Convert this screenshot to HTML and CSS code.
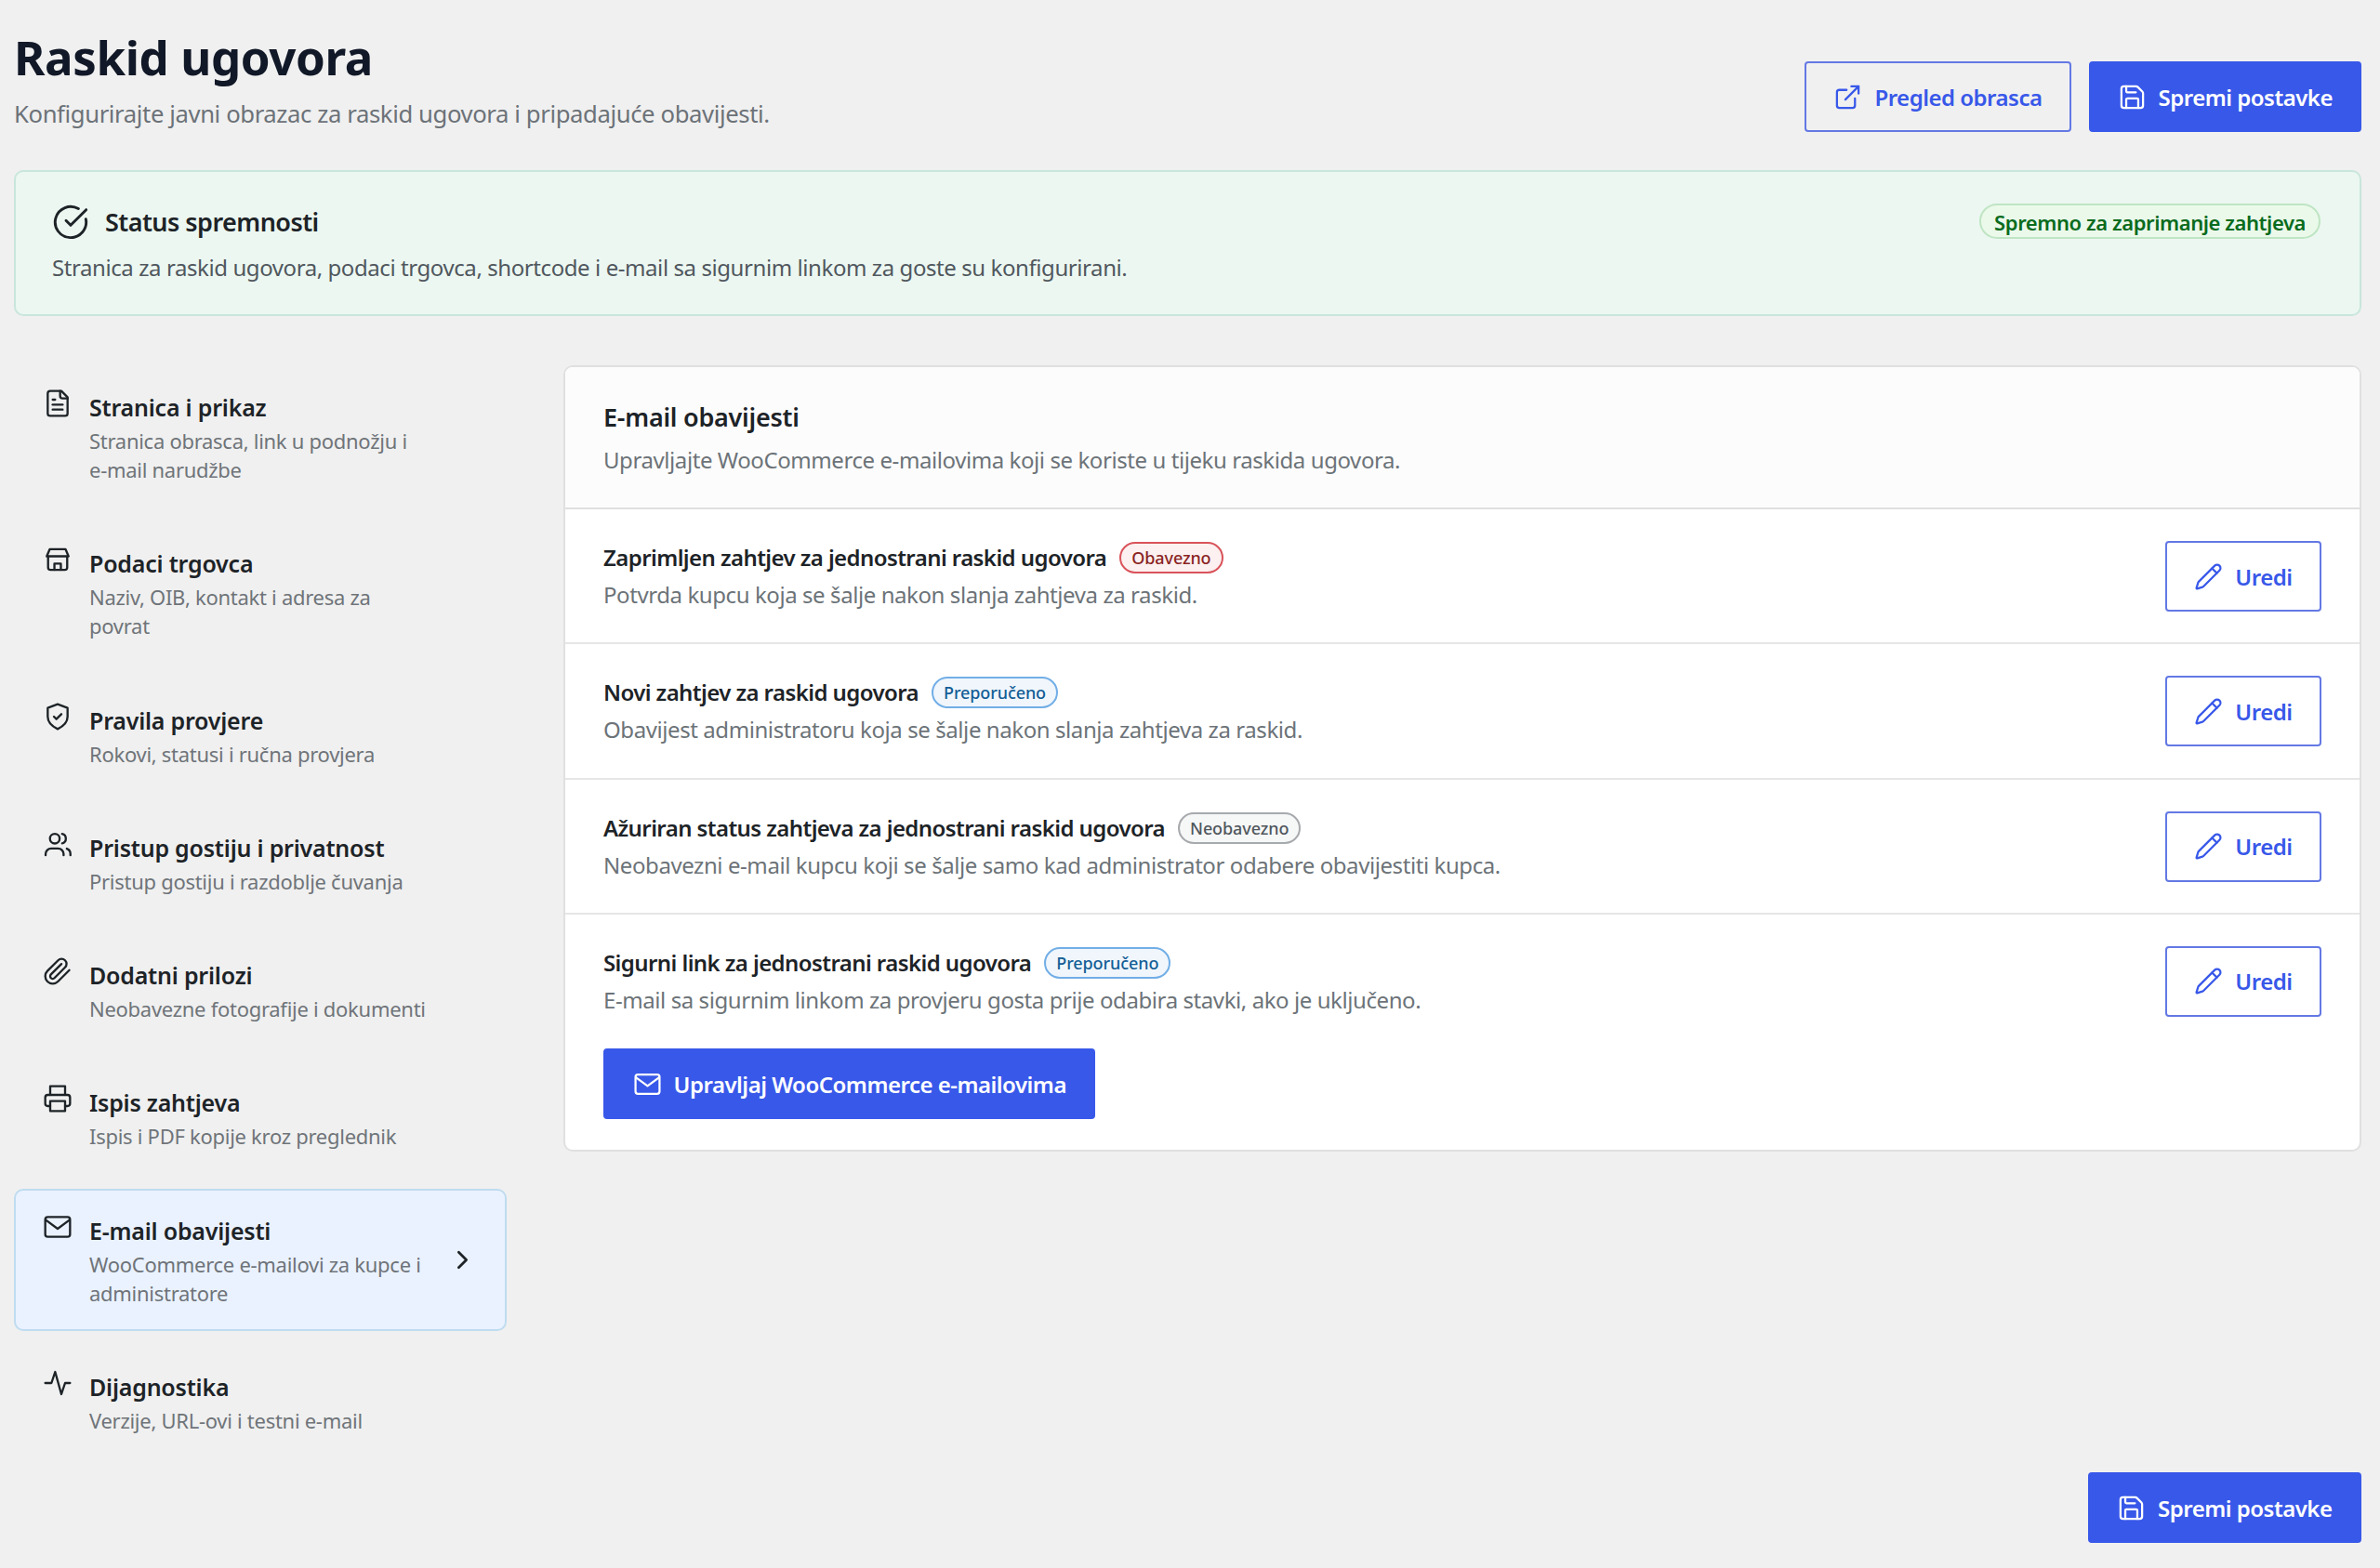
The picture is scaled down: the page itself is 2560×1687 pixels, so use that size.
FILE: index.html
```html
<!DOCTYPE html>
<html lang="hr">
<head>
    <meta charset="UTF-8">
    <meta name="viewport" content="width=device-width, initial-scale=1.0">
    <title>Raskid ugovora</title>
    <link rel="stylesheet" href="styles.css">
</head>
<body>

<!-- Icons -->
<svg class="sprite" xmlns="http://www.w3.org/2000/svg">
    <symbol id="i-external" viewBox="0 0 24 24"><path d="M15 3h6v6"/><path d="M10 14 21 3"/><path d="M18 13v6a2 2 0 0 1-2 2H5a2 2 0 0 1-2-2V8a2 2 0 0 1 2-2h6"/></symbol>
    <symbol id="i-save" viewBox="0 0 24 24"><path d="M15.2 3a2 2 0 0 1 1.4.6l3.8 3.8a2 2 0 0 1 .6 1.4V19a2 2 0 0 1-2 2H5a2 2 0 0 1-2-2V5a2 2 0 0 1 2-2z"/><path d="M17 21v-7a1 1 0 0 0-1-1H8a1 1 0 0 0-1 1v7"/><path d="M7 3v4a1 1 0 0 0 1 1h7"/></symbol>
    <symbol id="i-check" viewBox="0 0 24 24"><path d="M21.801 10A10 10 0 1 1 17 3.335"/><path d="m9 11 3 3L22 4"/></symbol>
    <symbol id="i-file" viewBox="0 0 24 24"><path d="M15 2H6a2 2 0 0 0-2 2v16a2 2 0 0 0 2 2h12a2 2 0 0 0 2-2V7Z"/><path d="M14 2v4a2 2 0 0 0 2 2h4"/><path d="M10 9H8"/><path d="M16 13H8"/><path d="M16 17H8"/></symbol>
    <symbol id="i-store" viewBox="0 0 24 24"><path d="M4.300 9.500v8.800a2 2 0 0 0 2 2h11.400a2 2 0 0 0 2-2V9.500"/><path d="M5.600 3.700h12.800l2.400 5.700H3.200z"/><path d="M9.400 20.300v-5h5.200v5"/></symbol>
    <symbol id="i-shield" viewBox="0 0 24 24"><path d="M12 2 20 5v7c0 5-3.500 7.800-8 10-4.500-2.200-8-5-8-10V5z"/><path d="m9 12 2 2 4-4"/></symbol>
    <symbol id="i-users" viewBox="0 0 24 24"><circle cx="9.700" cy="7.700" r="3.900"/><path d="M2.300 21.100v-1a4.500 4.500 0 0 1 4.500-4.500h5.500a4.500 4.500 0 0 1 4.500 4.500v1"/><path d="M15.600 3.900a3.900 3.900 0 0 1 0 7.600"/><path d="M19.400 15.800a4.500 4.500 0 0 1 2.900 4.300v1"/></symbol>
    <symbol id="i-clip" viewBox="0 0 24 24"><path d="m21.440 11.050-9.190 9.190a6 6 0 0 1-8.490-8.490l8.570-8.570A4 4 0 1 1 18 8.840l-8.590 8.570a2 2 0 0 1-2.830-2.830l8.490-8.480"/></symbol>
    <symbol id="i-print" viewBox="0 0 24 24"><path d="M6 18H4a2 2 0 0 1-2-2v-5a2 2 0 0 1 2-2h16a2 2 0 0 1 2 2v5a2 2 0 0 1-2 2h-2"/><path d="M6 9V2h12v7"/><path d="M6 14h12v8H6z"/></symbol>
    <symbol id="i-mail" viewBox="0 0 24 24"><rect x="2" y="4" width="20" height="16" rx="2"/><path d="m2.500 6.500 9.500 7 9.500-7"/></symbol>
    <symbol id="i-pulse" viewBox="0 0 24 24"><path d="M2 12h5l3-9 5 18 3-9h4"/></symbol>
    <symbol id="i-pencil" viewBox="0 0 24 24"><path d="M21.174 6.812a1 1 0 0 0-3.986-3.987L3.842 16.174a2 2 0 0 0-.5.830l-1.321 4.352a.5.5 0 0 0 .623.622l4.353-1.320a2 2 0 0 0 .830-.497z"/><path d="m15 5 4 4"/></symbol>
    <symbol id="i-chevron" viewBox="0 0 24 24"><path d="m9 18 6-6-6-6"/></symbol>
</svg>

<header class="page-header">
    <div>
        <h1>Raskid ugovora</h1>
        <p class="subtitle">Konfigurirajte javni obrazac za raskid ugovora i pripadajuće obavijesti.</p>
    </div>
    <div class="actions">
        <button class="btn btn-outline"><svg class="icon"><use href="#i-external"/></svg><span>Pregled obrasca</span></button>
        <button class="btn btn-primary"><svg class="icon"><use href="#i-save"/></svg><span>Spremi postavke</span></button>
    </div>
</header>

<section class="status">
    <div class="status-text">
        <div class="status-title"><svg class="icon"><use href="#i-check"/></svg><h2>Status spremnosti</h2></div>
        <p>Stranica za raskid ugovora, podaci trgovca, shortcode i e-mail sa sigurnim linkom za goste su konfigurirani.</p>
    </div>
    <span class="status-badge">Spremno za zaprimanje zahtjeva</span>
</section>

<div class="layout">
    <nav class="tabs">
        <a class="tab">
            <svg class="icon"><use href="#i-file"/></svg>
            <div><strong>Stranica i prikaz</strong><small>Stranica obrasca, link u podnožju i e-mail narudžbe</small></div>
        </a>
        <a class="tab">
            <svg class="icon"><use href="#i-store"/></svg>
            <div><strong>Podaci trgovca</strong><small>Naziv, OIB, kontakt i adresa za povrat</small></div>
        </a>
        <a class="tab">
            <svg class="icon"><use href="#i-shield"/></svg>
            <div><strong>Pravila provjere</strong><small>Rokovi, statusi i ručna provjera</small></div>
        </a>
        <a class="tab">
            <svg class="icon"><use href="#i-users"/></svg>
            <div><strong>Pristup gostiju i privatnost</strong><small>Pristup gostiju i razdoblje čuvanja</small></div>
        </a>
        <a class="tab">
            <svg class="icon"><use href="#i-clip"/></svg>
            <div><strong>Dodatni prilozi</strong><small>Neobavezne fotografije i dokumenti</small></div>
        </a>
        <a class="tab">
            <svg class="icon"><use href="#i-print"/></svg>
            <div><strong>Ispis zahtjeva</strong><small>Ispis i PDF kopije kroz preglednik</small></div>
        </a>
        <a class="tab active">
            <svg class="icon"><use href="#i-mail"/></svg>
            <div><strong>E-mail obavijesti</strong><small>WooCommerce e-mailovi za kupce i administratore</small></div>
            <svg class="chevron"><use href="#i-chevron"/></svg>
        </a>
        <a class="tab">
            <svg class="icon"><use href="#i-pulse"/></svg>
            <div><strong>Dijagnostika</strong><small>Verzije, URL-ovi i testni e-mail</small></div>
        </a>
    </nav>

    <main class="panel">
        <div class="panel-header">
            <h2>E-mail obavijesti</h2>
            <p>Upravljajte WooCommerce e-mailovima koji se koriste u tijeku raskida ugovora.</p>
        </div>

        <div class="email-row">
            <div>
                <div class="email-title"><h3>Zaprimljen zahtjev za jednostrani raskid ugovora</h3><span class="badge required">Obavezno</span></div>
                <p>Potvrda kupcu koja se šalje nakon slanja zahtjeva za raskid.</p>
            </div>
            <button class="btn btn-outline"><svg class="icon"><use href="#i-pencil"/></svg><span>Uredi</span></button>
        </div>
        <div class="email-row">
            <div>
                <div class="email-title"><h3>Novi zahtjev za raskid ugovora</h3><span class="badge recommended">Preporučeno</span></div>
                <p>Obavijest administratoru koja se šalje nakon slanja zahtjeva za raskid.</p>
            </div>
            <button class="btn btn-outline"><svg class="icon"><use href="#i-pencil"/></svg><span>Uredi</span></button>
        </div>
        <div class="email-row">
            <div>
                <div class="email-title"><h3>Ažuriran status zahtjeva za jednostrani raskid ugovora</h3><span class="badge optional">Neobavezno</span></div>
                <p>Neobavezni e-mail kupcu koji se šalje samo kad administrator odabere obavijestiti kupca.</p>
            </div>
            <button class="btn btn-outline"><svg class="icon"><use href="#i-pencil"/></svg><span>Uredi</span></button>
        </div>
        <div class="email-row">
            <div>
                <div class="email-title"><h3>Sigurni link za jednostrani raskid ugovora</h3><span class="badge recommended">Preporučeno</span></div>
                <p>E-mail sa sigurnim linkom za provjeru gosta prije odabira stavki, ako je uključeno.</p>
            </div>
            <button class="btn btn-outline"><svg class="icon"><use href="#i-pencil"/></svg><span>Uredi</span></button>
        </div>

        <div class="panel-footer">
            <button class="btn btn-primary"><svg class="icon"><use href="#i-mail"/></svg><span>Upravljaj WooCommerce e-mailovima</span></button>
        </div>
    </main>
</div>

<footer class="page-footer">
    <button class="btn btn-primary"><svg class="icon"><use href="#i-save"/></svg><span>Spremi postavke</span></button>
</footer>

</body>
</html>
```
FILE: styles.css
```css
* {
    box-sizing: border-box;
}

body {
    margin: 0;
    padding: 30px 20px 0 15px;
    background-color: #f0f0f0;
    color: #1d2327;
    font-family: "Noto Sans", sans-serif;
    font-size: 24px;
    line-height: 39px;
    letter-spacing: -0.42px;
}

h1, h2, h3, p {
    margin: 0;
}

.sprite {
    display: none;
}

svg {
    flex: none;
    fill: none;
    stroke: currentColor;
    stroke-width: 1.75;
    stroke-linecap: round;
    stroke-linejoin: round;
}

.page-header {
    display: flex;
    justify-content: space-between;
    align-items: flex-end;
    margin-bottom: 41px;
}

h1 {
    margin-bottom: 11px;
    color: #111827;
    font-size: 51px;
    font-weight: 700;
    line-height: 62px;
    letter-spacing: -0.4px;
}

.subtitle {
    color: #6c7278;
    font-size: 25.7px;
    letter-spacing: -0.4px;
}

.actions {
    display: flex;
    gap: 19px;
}

.btn {
    display: flex;
    align-items: center;
    gap: 13px;
    height: 76px;
    padding: 0 29.5px;
    border: 2px solid #3858e9;
    border-radius: 4px;
    font-family: inherit;
    font-size: 24px;
    font-weight: 600;
    line-height: 38px;
    letter-spacing: -0.5px;
    white-space: nowrap;
}

.btn span {
    padding-top: 1px;
}

.btn .icon {
    width: 31px;
    height: 31px;
}

.btn-primary {
    background-color: #3858e9;
    color: #fff;
}

.btn-outline {
    border-color: #6378e4;
    background-color: transparent;
    color: #3858e9;
}

.actions .btn {
    padding: 0 29px;
}

/* Status */
.status {
    display: flex;
    justify-content: space-between;
    align-items: flex-start;
    height: 157px;
    padding: 34px 42px 0 39px;
    border: 2px solid #c9e6dc;
    border-radius: 10px;
    background-color: #ecf7f1;
}

.status-title {
    display: flex;
    align-items: center;
    gap: 17px;
    margin-bottom: 9px;
}

.status-title .icon {
    width: 40px;
    height: 40px;
}

h2 {
    font-size: 27px;
    font-weight: 600;
    line-height: 40px;
    letter-spacing: -0.25px;
}

.status h2 {
    letter-spacing: -0.55px;
}

.status p {
    color: #50575e;
}

.status-badge {
    height: 38px;
    padding: 0 14px;
    border: 2px solid #bfe5c3;
    border-radius: 19px;
    background-color: #ebf9eb;
    color: #0a6b1d;
    font-size: 22px;
    font-weight: 600;
    line-height: 36px;
}

/* Layout */
.layout {
    display: grid;
    grid-template-columns: 530px 1fr;
    align-items: start;
    gap: 61px;
    margin-top: 53px;
}

.tabs {
    display: flex;
    flex-direction: column;
    gap: 15.3px;
}

.tab {
    display: flex;
    align-items: flex-start;
    gap: 18px;
    padding: 23px 28px 23px 29px;
    border: 2px solid transparent;
    border-radius: 10px;
}

.tab .icon {
    width: 32px;
    height: 32px;
}

.tab div {
    width: 363px;
    padding-top: 2px;
}

.tab strong, .tab small {
    display: block;
}

.tab strong {
    font-size: 25px;
    font-weight: 600;
    line-height: 36px;
    letter-spacing: -0.22px;
}

.tab small {
    margin-top: 3px;
    color: #6f7479;
    font-size: 22px;
    line-height: 31px;
    letter-spacing: -0.28px;
}

.tab.active {
    border-color: #bfdcf0;
    background-color: #eaf2ff;
}

.chevron {
    align-self: center;
    width: 33px;
    height: 33px;
    margin-left: 4px;
    stroke-width: 2;
}

/* Panel */
.panel {
    border: 2px solid #e0e0e0;
    border-radius: 10px;
    background-color: #fff;
    overflow: hidden;
}

.panel-header {
    padding: 34px 41px 32px;
    border-bottom: 2px solid #e0e0e0;
    background-color: #fcfcfc;
}

.panel-header h2 {
    margin-bottom: 6px;
}

.panel p {
    color: #6c7378;
}

.email-row {
    display: flex;
    justify-content: space-between;
    align-items: center;
    padding: 33px 41px 32.3px;
    border-bottom: 2px solid #e6e6e6;
}

.email-row:nth-last-child(2) {
    border-bottom: 0;
}

.email-row p {
    margin-top: 1px;
}

.email-title {
    display: flex;
    align-items: center;
    gap: 14px;
}

h3 {
    font-size: 24px;
    font-weight: 600;
    line-height: 38px;
    letter-spacing: -0.58px;
}

.badge {
    height: 34px;
    padding: 0 11px;
    border: 2px solid;
    border-radius: 17px;
    font-size: 18px;
    font-weight: 500;
    line-height: 31px;
    letter-spacing: -0.1px;
}

.required {
    border-color: #d9535a;
    background-color: #fcf0f0;
    color: #8a2424;
}

.recommended {
    border-color: #72aee6;
    background-color: #f0f6fc;
    color: #135e96;
}

.optional {
    border-color: #a7aaad;
    background-color: #f6f7f7;
    color: #50575e;
}

.panel-footer {
    display: flex;
    padding: 1px 41px 33px;
}

.page-footer {
    display: flex;
    justify-content: flex-end;
    margin-top: 15px;
}
```
